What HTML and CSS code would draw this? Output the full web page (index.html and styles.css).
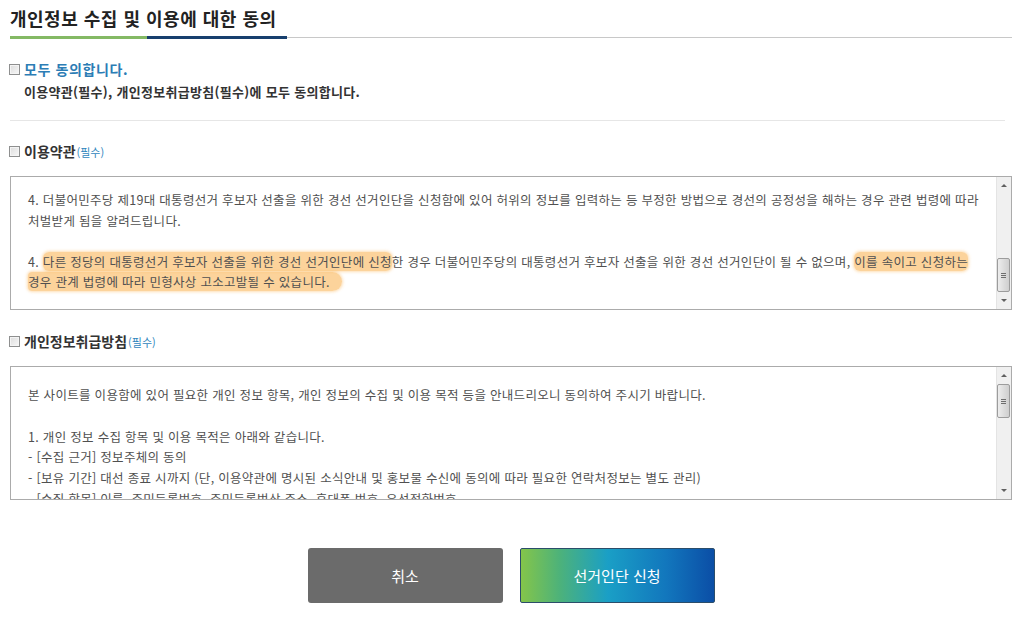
FILE: index.html
```html
<!DOCTYPE html>
<html lang="ko">
<head>
<meta charset="utf-8">
<title>개인정보 수집 및 이용에 대한 동의</title>
<link rel="stylesheet" href="styles.css">
</head>
<body>
<div class="page">
  <div class="head">
    <h1 class="title">개인정보 수집 및 이용에 대한 동의</h1>
    <div class="rule"><span class="rule-green"></span><span class="rule-blue"></span><span class="rule-gray"></span></div>
  </div>

  <div class="agree-all">
    <label class="row"><span class="chk"></span><span class="all-text">모두 동의합니다.</span></label>
    <p class="all-sub">이용약관(필수), 개인정보취급방침(필수)에 모두 동의합니다.</p>
  </div>

  <hr class="divider">

  <label class="row sec-label"><span class="chk"></span><span class="sec-name">이용약관</span><span class="req">(필수)</span></label>
  <div class="box">
    <div class="box-text box-text1">
      <p>4. 더불어민주당 제19대 대통령선거 후보자 선출을 위한 경선 선거인단을 신청함에 있어 허위의 정보를 입력하는 등 부정한 방법으로 경선의 공정성을 해하는 경우 관련 법령에 따라<br>처벌받게 됨을 알려드립니다.</p>
      <p>4. <span class="hl">다른 정당의 대통령선거 후보자 선출을 위한 경선 선거인단에 신청</span>한 경우 더불어민주당의 대통령선거 후보자 선출을 위한 경선 선거인단이 될 수 없으며, <span class="hl">이를 속이고 신청하는</span><br><span class="hl hl-end">경우 관계 법령에 따라 민형사상 고소고발될 수 있습니다.</span></p>
    </div>
    <div class="sb">
      <div class="sb-btn"><span class="arr-up"></span></div>
      <div class="sb-track"><div class="sb-thumb" style="margin-top:64px"><span class="grip"></span></div></div>
      <div class="sb-btn"><span class="arr-down"></span></div>
    </div>
  </div>

  <label class="row sec-label sec2"><span class="chk"></span><span class="sec-name">개인정보취급방침</span><span class="req">(필수)</span></label>
  <div class="box">
    <div class="box-text box-text2">
      <p>본 사이트를 이용함에 있어 필요한 개인 정보 항목, 개인 정보의 수집 및 이용 목적 등을 안내드리오니 동의하여 주시기 바랍니다.</p>
      <p>1. 개인 정보 수집 항목 및 이용 목적은 아래와 같습니다.<br>- [수집 근거] 정보주체의 동의<br>- [보유 기간] 대선 종료 시까지 (단, 이용약관에 명시된 소식안내 및 홍보물 수신에 동의에 따라 필요한 연락처정보는 별도 관리)<br>- [수집 항목] 이름, 주민등록번호, 주민등록번상 주소, 휴대폰 번호, 유선전화번호</p>
    </div>
    <div class="sb">
      <div class="sb-btn"><span class="arr-up"></span></div>
      <div class="sb-track"><div class="sb-thumb" style="margin-top:0"><span class="grip"></span></div></div>
      <div class="sb-btn"><span class="arr-down"></span></div>
    </div>
  </div>

  <div class="actions">
    <button class="btn btn-cancel" type="button">취소</button>
    <button class="btn btn-submit" type="button">선거인단 신청</button>
  </div>
</div>
</body>
</html>
```

FILE: styles.css
```css
* { box-sizing: border-box; }
html, body { margin: 0; padding: 0; background: #fff; }
body {
  font-family: "Noto Sans CJK KR", "Noto Sans", sans-serif;
  color: #333;
  width: 1024px;
  height: 617px;
  overflow: hidden;
}
.page { padding: 0 12px 0 10px; }

.head { padding-top: 5px; }
.title {
  margin: 0;
  font-size: 18px;
  line-height: 26px;
  font-weight: 700;
  color: #222;
  letter-spacing: 0.5px;
}
.rule {
  margin-top: 5px;
  display: flex;
  align-items: flex-end;
  height: 3px;
}
.rule-green { width: 137px; height: 3px; background: #84b964; }
.rule-blue { width: 140px; height: 3px; background: #173f6e; }
.rule-gray { flex: 1; height: 1px; background: #c8c8c8; margin-bottom: 1px; }

.row { display: flex; align-items: center; height: 20px; }
.chk {
  width: 11px;
  height: 11px;
  margin-left: -1px;
  margin-right: 4px;
  border: 1px solid #8e8f8f;
  background: linear-gradient(135deg, #dcdcdc, #f7f7f7);
  box-shadow: inset 0 0 0 1px #f4f4f4;
}
.agree-all { margin-top: 20px; }
.all-text { font-size: 14px; font-weight: 700; color: #2c7db5; letter-spacing: 0.6px; }
.all-sub {
  margin: 3px 0 0 14px;
  font-size: 13px;
  line-height: 20px;
  font-weight: 700;
  color: #333;
  letter-spacing: 0.3px;
}
.divider {
  margin: 18px 7px 0 0;
  border: 0;
  height: 1px;
  background: #e6e6e6;
}

.sec-label { margin-top: 20px; }
.sec2 { margin-top: 21px; }
.sec-name { font-size: 14px; font-weight: 700; color: #333; }
.req { font-size: 11px; color: #2f86bd; margin-left: 1px; padding-top: 2px; }

.box {
  margin-top: 15px;
  height: 134px;
  border: 1px solid #ababab;
  display: flex;
  background: #fff;
}
.box-text {
  flex: 1;
  overflow: hidden;
  padding-left: 17px;
  font-size: 12.5px;
  letter-spacing: 0.3px;
  color: #505050;
  white-space: nowrap;
}
.box-text p { margin: 0; }
.box-text1 { padding-top: 13px; line-height: 20.5px; }
.box-text1 p + p { margin-top: 20.5px; }
.box-text2 { padding-top: 18px; line-height: 20.8px; }
.box-text2 p + p { margin-top: 20.8px; }

.hl {
  background: rgba(250, 182, 88, 0.6);
  border-radius: 6px;
  box-shadow: 0 0 3px 1px rgba(250, 182, 88, 0.45);
}
.hl-end { padding-right: 12px; border-radius: 6px 14px 14px 6px; }

.sb {
  width: 15px;
  display: flex;
  flex-direction: column;
  background: #f0f0f0;
  border-left: 1px solid #e4e4e4;
}
.sb-btn {
  height: 17px;
  display: flex;
  align-items: center;
  justify-content: center;
}
.arr-up, .arr-down {
  width: 0; height: 0;
  border-left: 3px solid transparent;
  border-right: 3px solid transparent;
}
.arr-up { border-bottom: 3px solid #606060; }
.arr-down { border-top: 3px solid #606060; }
.sb-track { flex: 1; display: flex; flex-direction: column; }
.sb-thumb {
  height: 34px;
  margin-right: 1px;
  border: 1px solid #9c9c9c;
  border-radius: 2px;
  background: linear-gradient(90deg, #ededed, #dadada 60%, #cfcfcf);
  display: flex;
  align-items: center;
  justify-content: center;
}
.grip {
  width: 5px;
  height: 5px;
  background: repeating-linear-gradient(180deg, #6e6e6e 0 1px, transparent 1px 2px);
}

.actions {
  margin-top: 48px;
  display: flex;
  justify-content: center;
  gap: 17px;
}
.btn {
  width: 195px;
  height: 55px;
  border: 0;
  border-radius: 3px;
  color: #fff;
  font-family: "Noto Sans CJK KR", "Noto Sans", sans-serif;
  font-size: 15px;
  cursor: pointer;
}
.btn-cancel { background: #6b6b6b; }
.btn-submit {
  border: 1px solid #2b4d6a;
  border-radius: 2px;
  background: linear-gradient(90deg, #84c54a 0%, #4db27a 20%, #1a9fc6 45%, #1277bd 75%, #0b4ea6 100%);
}
```
